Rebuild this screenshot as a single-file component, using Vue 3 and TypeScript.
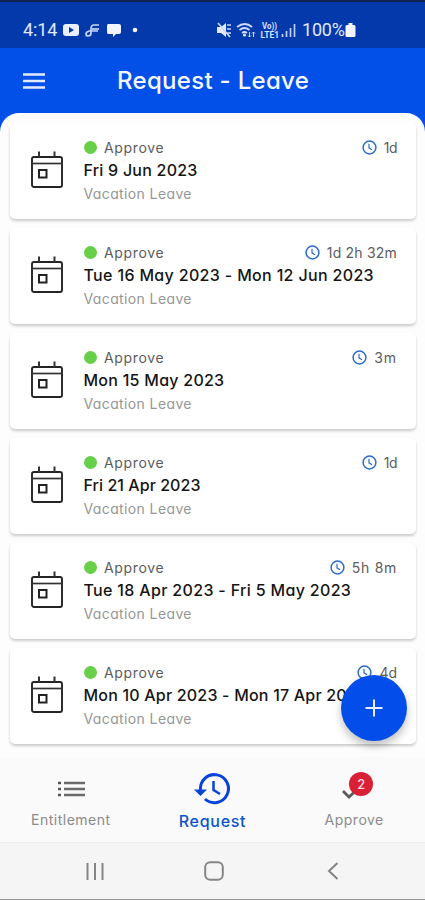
<script setup lang="ts">
interface LeaveRequest {
  dates: string
  duration: string
  spacing: number
  durationSpacing: number
}

const requests: LeaveRequest[] = [
  { dates: 'Fri 9 Jun 2023', duration: '1d', spacing: 0.23, durationSpacing: -0.5 },
  { dates: 'Tue 16 May 2023 - Mon 12 Jun 2023', duration: '1d 2h 32m', spacing: 0.34, durationSpacing: 0.2 },
  { dates: 'Mon 15 May 2023', duration: '3m', spacing: 0.26, durationSpacing: 0.9 },
  { dates: 'Fri 21 Apr 2023', duration: '1d', spacing: 0.05, durationSpacing: -0.5 },
  { dates: 'Tue 18 Apr 2023 - Fri 5 May 2023', duration: '5h 8m', spacing: 0.33, durationSpacing: 0.7 },
  { dates: 'Mon 10 Apr 2023 - Mon 17 Apr 2023', duration: '4d', spacing: 0.2, durationSpacing: 0 },
]
</script>

<template>
  <div class="screen">
    <header class="status">
      <span class="time">4:14</span>
      <svg class="apps" width="78" height="18" viewBox="0 0 78 18">
        <rect x="1" y="3" width="16" height="12" rx="3" fill="#e9efff" />
        <path d="M7 6l5 3-5 3z" fill="#0338a5" />
        <g fill="none" stroke="#c5d5fa" stroke-width="1.7">
          <path d="M37 4h-5q-3 0-3 4v4q0 3-3 3-2 0-2-2 0-2 3-3h9" />
          <path d="M30 8h7" />
        </g>
        <path d="M46 3h11q2 0 2 2v6q0 2-2 2h-3l-3 3v-3h-5q-1 0-1-2V5q0-2 1-2z" fill="#f2f5ff" />
        <circle cx="73" cy="9" r="2.3" fill="#f2f5ff" />
      </svg>
      <span class="spacer"></span>
      <svg width="82" height="18" viewBox="0 0 82 18" class="signals">
        <path d="M0 6h4l5-4v14l-5-4H0z" fill="#e2eaff" />
        <path d="M1 2l12 14M10 4h4M10 8h4M10 12h4" stroke="#c9d7fb" stroke-width="1.7" fill="none" />
        <g fill="none" stroke="#cddafc" stroke-width="1.7">
          <path d="M20 6q8-6 15 0M22.500 9q5-4 10 0M25 12q2.500-2 5 0" />
          <path d="M32.500 11v5M31 14.500l1.500 1.500 1.500-1.500M36.500 16v-5M35 12.500l1.500-1.500 1.500 1.500" stroke-width="1" />
        </g>
        <circle cx="27.500" cy="14" r="1.600" fill="#dbe5ff" />
        <text x="45" y="8" class="volte" textLength="15" lengthAdjust="spacingAndGlyphs">Vo))</text>
        <text x="43.500" y="16.500" class="volte" textLength="18.500" lengthAdjust="spacingAndGlyphs">LTE1</text>
        <path d="M65.500 16v-3M69.500 16v-6M73.500 16V7M77.500 16V3" stroke="#bdcef9" stroke-width="1.700" />
      </svg>
      <span class="percent">100%</span>
      <svg width="11" height="16" viewBox="0 0 11 16">
        <path d="M3.500 1h4v2h1.500q1.500 0 1.500 1.500v9q0 1.500-1.500 1.500H2Q.5 15 .5 13.500v-9Q.5 3 2 3h1.500z" fill="#f2f5ff" />
      </svg>
    </header>

    <div class="toolbar">
      <svg class="menu" width="22" height="18" viewBox="0 0 22 18">
        <path d="M0 2.500h22M0 9h22M0 15.500h22" stroke="#e4ebff" stroke-width="2.500" />
      </svg>
      <h1>Request - Leave</h1>
    </div>

    <main class="list">
      <article v-for="item in requests" :key="item.dates" class="card">
        <svg class="calendar" width="32" height="37" viewBox="0 0 32 37">
          <rect x="1" y="6" width="30" height="30" rx="2" fill="none" stroke="#242424" stroke-width="1.900" />
          <path d="M1 12.500h30" stroke="#333" stroke-width="1.700" />
          <path d="M8 .5V6M23.500 .5V6" stroke="#333" stroke-width="2" />
          <rect x="8" y="19" width="7.500" height="7.500" fill="none" stroke="#222" stroke-width="2" />
        </svg>
        <div class="details">
          <div class="meta">
            <i class="dot"></i>
            <span class="state">Approve</span>
            <span class="spacer"></span>
            <svg class="clock" width="15" height="15" viewBox="0 0 15 15" fill="none" stroke="#2c6bc9" stroke-width="1.500">
              <circle cx="7.500" cy="7.500" r="6.400" />
              <path d="M7 3.800v4l3 1.900" stroke-width="1.200" />
            </svg>
            <span class="duration" :style="{ letterSpacing: item.durationSpacing + 'px' }">{{ item.duration }}</span>
          </div>
          <div class="dates" :style="{ letterSpacing: item.spacing + 'px' }">{{ item.dates }}</div>
          <div class="kind">Vacation Leave</div>
        </div>
      </article>
      <button class="add" aria-label="Add request">
        <svg width="18" height="18" viewBox="0 0 18 18">
          <path d="M9 .5v17M.5 9h17" stroke="#e8eeff" stroke-width="2" />
        </svg>
      </button>
    </main>

    <nav class="tabs">
      <div class="tab">
        <div class="glyph">
          <svg class="rows" width="28" height="18" viewBox="0 0 28 18">
            <path d="M0 3h3M0 9h3M0 15h3" stroke="#555" stroke-width="2.300" />
            <path d="M6 3h21M6 9h21M6 15h21" stroke="#6b6b6b" stroke-width="2.300" />
          </svg>
        </div>
        <span class="label">Entitlement</span>
      </div>
      <div class="tab active">
        <div class="glyph">
          <svg width="36" height="32" viewBox="0 0 36 32" fill="none" stroke="#0543dc" stroke-width="3">
            <path d="M6.500 17A14 14 0 1 1 11 26" />
            <path d="M0 16.500h13l-6.500 6.500z" fill="#0543dc" stroke="none" />
            <path d="M19.500 8v9l6.500 4" stroke-width="2.500" />
          </svg>
        </div>
        <span class="label">Request</span>
      </div>
      <div class="tab">
        <div class="glyph">
          <svg class="check" width="24" height="18" viewBox="0 0 24 18">
            <path d="M1 9l6 6L22 1" fill="none" stroke="#5b5b5b" stroke-width="2.800" />
          </svg>
          <b class="badge">2</b>
        </div>
        <span class="label">Approve</span>
      </div>
    </nav>

    <footer class="system">
      <svg width="18" height="19" viewBox="0 0 18 19">
        <path d="M1.500 1v17M9 1v17M16.500 1v17" stroke="#858585" stroke-width="2" />
      </svg>
      <svg class="home" width="20" height="20" viewBox="0 0 20 20">
        <rect x="1.200" y="1.200" width="17.600" height="17.600" rx="5" fill="none" stroke="#858585" stroke-width="2" />
      </svg>
      <svg width="12" height="18" viewBox="0 0 12 18">
        <path d="M10.500 1L2 9l8.500 8" fill="none" stroke="#858585" stroke-width="2" />
      </svg>
    </footer>
  </div>
</template>

<style>
body {
  background: #fff;
}
</style>

<style scoped>
.screen {
  width: 425px;
  height: 900px;
  overflow: hidden;
  display: flex;
  flex-direction: column;
  background: #0350e9;
  font-family: Inter, 'Open Sans', sans-serif;
  font-feature-settings: 'cv11', 'ss03';
  box-sizing: border-box;
}
.spacer {
  flex: 1;
}
.status {
  height: 48px;
  box-sizing: border-box;
  border-top: 2px solid #102050;
  background: #0339ab;
  color: #e0e9ff;
  display: flex;
  align-items: center;
  padding: 9px 69px 0 23px;
  font: 18px/20px Roboto, sans-serif;
}
.time {
  width: 35px;
  letter-spacing: -0.1px;
}
.apps {
  margin-left: 4px;
}
.signals {
  margin-right: 3px;
}
.percent {
  width: 43px;
  letter-spacing: -0.2px;
}
.volte {
  font: bold 8.5px Roboto, sans-serif;
  fill: #d5e0ff;
}
.toolbar {
  height: 65px;
  display: flex;
  align-items: center;
  padding-left: 23px;
}
h1 {
  margin: 0 0 0 72px;
  color: #f4f7ff;
  font-size: 24px;
  font-weight: 500;
  line-height: 34px;
  letter-spacing: 0.3px;
  white-space: nowrap;
}
.list {
  position: relative;
  height: 644px;
  box-sizing: border-box;
  padding: 10px 9px 0 10px;
  background: #fdfdfd;
  border-radius: 19px 19px 0 0;
  display: flex;
  flex-direction: column;
  gap: 9px;
}
.card {
  flex: 0 0 96px;
  box-sizing: border-box;
  display: flex;
  padding: 16px 19px 0 20px;
  background: #fff;
  border-radius: 5px;
  box-shadow: 0 2px 3px rgba(0, 0, 0, 0.2);
}
.calendar {
  flex: none;
  margin: 12px 21px 0 0.5px;
}
.details {
  flex: 1;
  white-space: nowrap;
}
.meta {
  display: flex;
  align-items: center;
  height: 17px;
  padding-bottom: 1px;
  color: #5c5c5c;
  font-size: 14px;
}
.dot {
  width: 13px;
  height: 13px;
  margin: 0 7px 0 0.5px;
  border-radius: 50%;
  background: #68cf4b;
}
.state {
  letter-spacing: 0.65px;
}
.clock {
  margin-right: 7px;
}
.dates {
  color: #151515;
  font-size: 16px;
  font-weight: 500;
  line-height: 26px;
}
.kind {
  color: #979797;
  font-size: 14px;
  line-height: 22px;
  letter-spacing: 0.38px;
}
.add {
  position: absolute;
  left: 341px;
  top: 562px;
  width: 66px;
  height: 66px;
  padding: 0;
  border: 0;
  border-radius: 50%;
  background: #034eea;
  box-shadow: 0 5px 8px rgba(0, 0, 0, 0.25);
  display: grid;
  place-items: center;
}
.tabs {
  height: 85px;
  background: #fafafa;
  display: grid;
  grid-template-columns: 1fr 1fr 1fr;
}
.tab {
  display: flex;
  flex-direction: column;
  align-items: center;
}
.glyph {
  position: relative;
  height: 36px;
  margin-top: 14px;
  display: grid;
  place-items: center;
}
.rows {
  margin-left: 2px;
}
.check {
  margin-top: 3px;
}
.label {
  margin-top: 3px;
  color: #8b8b8b;
  font-size: 14px;
  line-height: 20px;
  letter-spacing: 0.5px;
}
.active .label {
  color: #0b56c5;
  font-size: 16px;
  font-weight: 500;
  line-height: 22px;
  letter-spacing: 0.7px;
}
.badge {
  position: absolute;
  left: 7px;
  top: 1px;
  width: 24px;
  height: 24px;
  border-radius: 50%;
  background: #d92037;
  color: #f7d6dc;
  font-size: 13px;
  font-weight: 500;
  line-height: 24px;
  text-align: center;
}
.system {
  height: 58px;
  box-sizing: border-box;
  border-top: 1px solid #eee;
  border-bottom: 1px solid #929292;
  background: #f5f5f5;
  display: flex;
  align-items: center;
  padding: 0 86px;
  justify-content: space-between;
}
.home {
  margin-right: 4px;
}
</style>
